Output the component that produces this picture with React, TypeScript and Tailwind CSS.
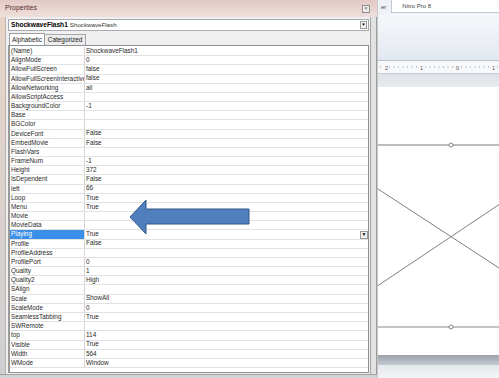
import React from "react";

const rows: [string, string][] = [
  ["(Name)", "ShockwaveFlash1"],
  ["AlignMode", "0"],
  ["AllowFullScreen", "false"],
  ["AllowFullScreenInteractive", "false"],
  ["AllowNetworking", "all"],
  ["AllowScriptAccess", ""],
  ["BackgroundColor", "-1"],
  ["Base", ""],
  ["BGColor", ""],
  ["DeviceFont", "False"],
  ["EmbedMovie", "False"],
  ["FlashVars", ""],
  ["FrameNum", "-1"],
  ["Height", "372"],
  ["IsDependent", "False"],
  ["left", "66"],
  ["Loop", "True"],
  ["Menu", "True"],
  ["Movie", ""],
  ["MovieData", ""],
  ["Playing", "True"],
  ["Profile", "False"],
  ["ProfileAddress", ""],
  ["ProfilePort", "0"],
  ["Quality", "1"],
  ["Quality2", "High"],
  ["SAlign", ""],
  ["Scale", "ShowAll"],
  ["ScaleMode", "0"],
  ["SeamlessTabbing", "True"],
  ["SWRemote", ""],
  ["top", "114"],
  ["Visible", "True"],
  ["Width", "564"],
  ["WMode", "Window"],
];

const font = { fontFamily: '"Liberation Sans", Arial, sans-serif' };

function Row({ name, value }: { name: string; value: string }) {
  const sel = name === "Playing";
  return (
    <div className="flex h-[9.18px] border-b border-[#e2e2e2] leading-[8.5px]">
      <div
        className={
          sel
            ? "w-[74px] shrink-0 bg-[#3a8fe8] text-white pl-[1px] whitespace-nowrap overflow-visible"
            : "w-[74px] shrink-0 text-[#2a2a2a] pl-[1px] whitespace-nowrap overflow-visible"
        }
      >
        {name}
      </div>
      <div className="w-[1px] shrink-0 bg-[#d4d4d4]" />
      <div className="flex-1 flex items-center pl-[1px] text-[#2a2a2a] bg-white">
        <span className="flex-1">{value}</span>
        {sel && (
          <span className="w-[8px] h-[8px] border border-[#9a9a9a] bg-[#f2f2f2] flex items-center justify-center text-[5px] leading-none text-black">
            ▼
          </span>
        )}
      </div>
    </div>
  );
}

export default function App() {
  return (
    <div
      className="w-[499px] h-[378px] relative overflow-hidden flex bg-white text-[6.4px]"
      style={font}
    >
      {/* Properties window */}
      <div className="w-[377px] h-full flex flex-col shrink-0">
        <div className="h-[17px] shrink-0 flex items-center justify-between bg-gradient-to-b from-[#e3c9c5] to-[#eedfdc] pl-[5px] pr-[7px]">
          <span className="text-[7px] text-[#5a2e2e]">Properties</span>
          <span className="w-[8px] h-[8px] border border-[#8e8e8e] bg-[#eeeaea] flex items-center justify-center text-[5px] leading-none text-[#555]">
            ×
          </span>
        </div>
        <div className="flex-1 flex min-h-0">
          <div className="w-[6px] shrink-0 bg-gradient-to-b from-[#e6d4c6] to-[#cfcfd3] border-r border-[#b9b2ad]" />
          <div className="flex-1 flex flex-col bg-[#f0f0f0] min-w-0 pl-[2px] pr-[1px]">
            {/* combo */}
            <div className="mt-[2px] h-[12px] shrink-0 flex items-center bg-white border border-[#a9abb0] pl-[2px] pr-[1px]">
              <span className="font-bold text-[6.6px] text-black">ShockwaveFlash1</span>
              <span className="ml-[2px] text-[6.2px] text-[#333]">ShockwaveFlash</span>
              <span className="flex-1" />
              <span className="w-[7px] h-[8px] border border-[#9a9a9a] bg-[#f4f4f4] flex items-center justify-center text-[4.5px] leading-none">
                ▼
              </span>
            </div>
            {/* tabs */}
            <div className="h-[14px] shrink-0 flex items-end pl-[1px]">
              <div className="h-[12px] px-[2px] flex items-center bg-white border border-b-0 border-[#9c9c9c] text-[6.4px] text-[#222]">
                Alphabetic
              </div>
              <div className="h-[11px] px-[3px] flex items-center bg-[#ececec] border border-l-0 border-b-0 border-[#a8a8a8] text-[6.4px] text-[#222]">
                Categorized
              </div>
            </div>
            {/* grid */}
            <div className="flex-1 flex flex-col bg-white border border-[#8d9096] border-l-[2px] border-l-[#9a9a9a] min-h-0 overflow-hidden pt-[1px]">
              {rows.map(([n, v]) => (
                <Row key={n} name={n} value={v} />
              ))}
            </div>
            <div className="h-[1px] shrink-0" />
          </div>
          <div className="w-[7px] shrink-0 bg-[#e2e2e2] border-l border-l-[#a5a5a5] border-r border-r-[#9c9c9c]" />
        </div>
        <div className="h-[4px] shrink-0 bg-[#d2d2d4] border-t border-[#a0a0a0]" />
      </div>

      {/* Right background application */}
      <div className="flex-1 h-full flex flex-col min-w-0 border-l border-[#c9c9c9]">
        <div className="h-[14px] shrink-0 flex items-start bg-[#eef2f7]">
          <span className="ml-[3px] mt-[3px] text-[6px] text-[#444]">er</span>
          <div className="ml-[5px] h-[13px] flex-1 bg-white border border-t-0 border-r-0 border-[#c3cad4] flex items-center pl-[10px] text-[6px] text-[#444] whitespace-nowrap">
            Nitro Pro 8
          </div>
        </div>
        <div className="h-[47px] shrink-0 bg-gradient-to-b from-[#f6f8fb] to-[#e3e9f1] border-b border-[#b9c2cd]" />
        <div className="h-[13px] shrink-0 bg-[#f7f8fa] border-b border-[#c7cdd5] flex items-center relative text-[5.5px] text-[#555]">
          <svg width="121" height="12" className="absolute left-0 top-0">
            {Array.from({ length: 30 }).map((_, i) => (
              <rect key={i} x={2 + i * 4.5} y={5.5} width={1} height={1} fill="#8a8a8a" />
            ))}
          </svg>
          <span className="absolute left-[6px] top-[3px] bg-[#f7f8fa] px-[1px]">2</span>
          <span className="absolute left-[41px] top-[3px] bg-[#f7f8fa] px-[1px]">1</span>
          <span className="absolute left-[77px] top-[3px] bg-[#f7f8fa] px-[1px]">0</span>
          <span className="absolute left-[113px] top-[3px] bg-[#f7f8fa] px-[1px]">1</span>
        </div>
        <div className="h-[13px] shrink-0 bg-gradient-to-b from-[#dfe3e9] to-[#e8ebef]" />
        <div className="flex-1 min-h-0 bg-white">
          <svg width="122" height="267" viewBox="0 0 122 267">
            <line x1="0" y1="58" x2="122" y2="58" stroke="#7a7a7a" strokeWidth="1" />
            <circle cx="73" cy="58" r="2" fill="white" stroke="#6a6a6a" strokeWidth="0.8" />
            <line x1="0" y1="102" x2="122" y2="181.6" stroke="#7f7f7f" strokeWidth="1" />
            <line x1="0" y1="198.6" x2="122" y2="116.9" stroke="#7f7f7f" strokeWidth="1" />
            <line x1="0" y1="240" x2="122" y2="240" stroke="#8a8a8a" strokeWidth="1" />
            <circle cx="73" cy="240" r="2" fill="white" stroke="#6a6a6a" strokeWidth="0.8" />
          </svg>
        </div>
        <div className="h-[10px] shrink-0 bg-gradient-to-b from-[#9aa2ab] to-[#c3c9d0]" />
        <div className="h-[13px] shrink-0 bg-gradient-to-b from-[#e4e7eb] to-[#f3f4f6]" />
      </div>

      {/* Blue arrow overlay */}
      <svg
        className="absolute left-[128px] top-[198px]"
        width="124"
        height="38"
        viewBox="0 0 124 38"
      >
        <polygon
          points="2,19 18,2 18,11 121,11 121,26 18,26 18,36"
          fill="#4f7fbd"
          stroke="#35598a"
          strokeWidth="1"
        />
      </svg>
    </div>
  );
}
